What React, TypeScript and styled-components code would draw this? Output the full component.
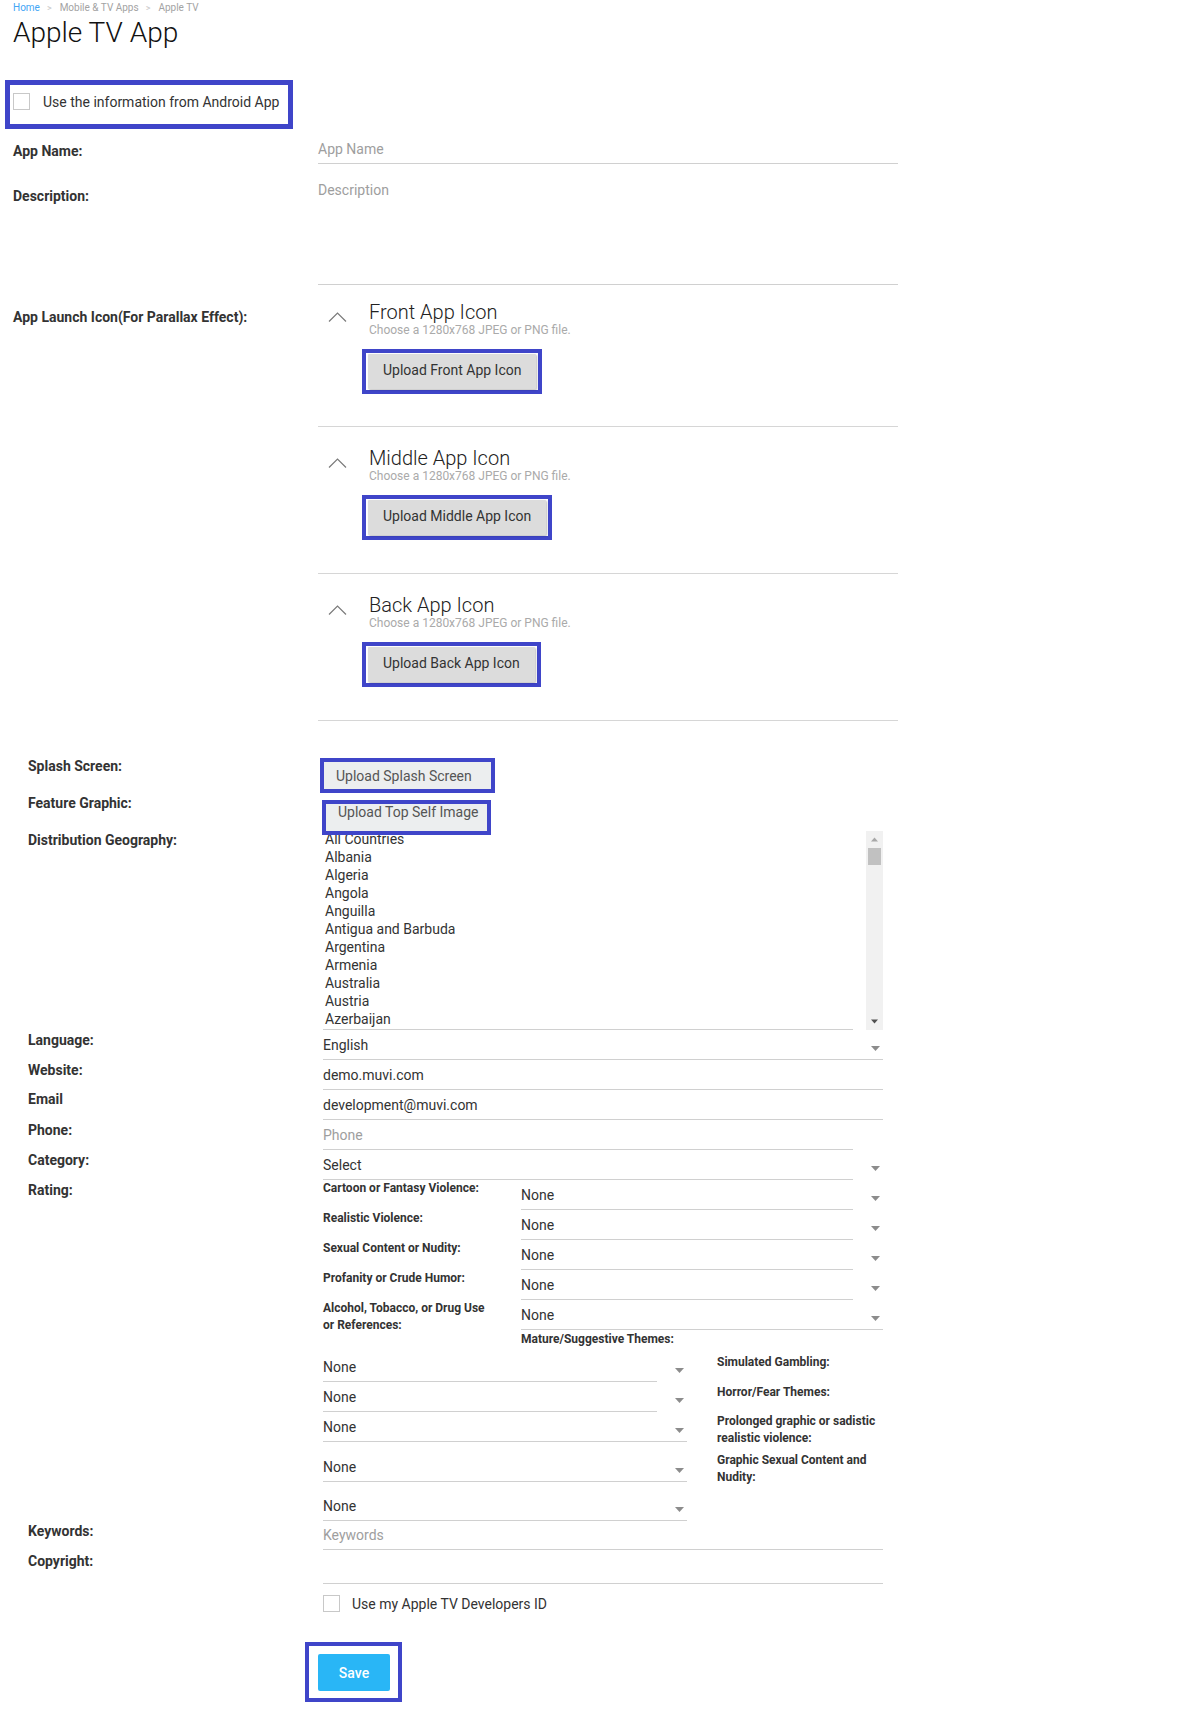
import React from 'react';
import styled, { createGlobalStyle } from 'styled-components';

const GlobalStyle = createGlobalStyle`
  body {
    margin: 0;
    background: #fff;
    font-family: Roboto, 'Liberation Sans', Arial, sans-serif;
    color: #333;
  }
  * { box-sizing: border-box; }
`;

const ANNOT = '#3f45c9';
const RULE = '#d0d0d0';

const Page = styled.div`
  width: 1199px;
  padding: 0 0 13px 13px;
`;

const Breadcrumb = styled.div`
  display: flex;
  align-items: center;
  height: 16px;
  font-size: 10px;
  line-height: 16px;
`;

const Crumb = styled.span<{ $active?: boolean }>`
  color: ${(p) => (p.$active ? '#42a5f5' : '#a3a3a3')};
`;

const Sep = styled.span`
  color: #c8c8c8;
  font-size: 9px;
  margin: 0 8px 0 7px;
`;

const Title = styled.h1`
  margin: 0;
  font-size: 28px;
  line-height: 34px;
  font-weight: 300;
  color: #111;
`;

/* blue annotation frame drawn round some controls */
const Highlight = styled.div`
  display: inline-flex;
  align-items: center;
  position: relative;
  z-index: 1;
  border: 4px solid ${ANNOT};
`;

const AndroidBox = styled(Highlight)`
  border-width: 5px;
  height: 49px;
  margin: 30px 0 0 -8px;
  padding: 0 9px 6px 3px;
  gap: 13px;
  font-size: 14px;
  color: #333;
`;

const Checkbox = styled.span`
  display: inline-block;
  width: 17px;
  height: 17px;
  border: 1px solid #c8c8c8;
  background: #fff;
  flex: none;
`;

const Grid = styled.div<{ $cols: string; $mt?: number }>`
  display: grid;
  grid-template-columns: ${(p) => p.$cols};
  align-items: start;
  margin-top: ${(p) => p.$mt ?? 0}px;
`;

const Label = styled.div<{ $mt?: number }>`
  margin-top: ${(p) => p.$mt ?? 2}px;
  font-size: 14px;
  font-weight: 700;
  line-height: 16px;
  color: #333;
`;

const Line = styled.div<{ $h: number; $short?: boolean; $muted?: boolean; $top?: boolean }>`
  height: ${(p) => p.$h}px;
  margin-right: ${(p) => (p.$short ? 30 : 0)}px;
  border-bottom: 1px solid ${RULE};
  display: flex;
  align-items: ${(p) => (p.$top ? 'flex-start' : 'center')};
  padding-top: ${(p) => (p.$top ? 6 : 0)}px;
  font-size: 14px;
  line-height: 16px;
  color: ${(p) => (p.$muted ? '#9e9e9e' : '#333')};
`;

const SelectWrap = styled.div<{ $mt?: number }>`
  position: relative;
  margin-top: ${(p) => p.$mt ?? 0}px;
`;

const CaretIcon = styled.svg`
  position: absolute;
  right: 3px;
  top: 16px;
`;

const Panel = styled.div<{ $first?: boolean }>`
  display: flex;
  padding: ${(p) => (p.$first ? '15px 0 32px 10px' : '19px 0 33px 10px')};
  border-bottom: 1px solid #d6d6d6;
`;

const ChevCell = styled.div`
  width: 41px;
  flex: none;
  padding-top: 7px;
`;

const PanelBody = styled.div`
  display: flex;
  flex-direction: column;
  align-items: flex-start;
`;

const PanelTitle = styled.div`
  font-size: 20px;
  line-height: 24px;
  font-weight: 300;
  color: #222;
`;

const PanelHint = styled.div`
  margin-top: -1px;
  font-size: 12px;
  line-height: 14px;
  color: #aaa;
`;

const UploadBox = styled(Highlight)`
  margin: 12px 0 0 -7px;
  padding: 1px 2px;
`;

const UploadButton = styled.button`
  height: 35px;
  padding: 0 15px 3px;
  border: 0;
  border-radius: 1px;
  background: #dcdcdc;
  box-shadow: 1px 1px 2px rgba(0, 0, 0, 0.25);
  font-family: inherit;
  font-size: 14px;
  color: #333;
`;

const Section2 = styled.div`
  margin-left: 15px;
`;

const PlainBox = styled(Highlight)<{ $ml: number }>`
  margin-left: ${(p) => p.$ml}px;
`;

const PlainButton = styled.button<{ $w: number; $top?: boolean }>`
  width: ${(p) => p.$w}px;
  height: 27px;
  display: flex;
  align-items: ${(p) => (p.$top ? 'flex-start' : 'center')};
  padding: 0 0 0 12px;
  border: 0;
  background: #eceeef;
  font-family: inherit;
  font-size: 14px;
  line-height: 16px;
  color: #555;
`;

const GeoWrap = styled.div`
  display: flex;
  height: 199px;
`;

const GeoList = styled.div`
  flex: 1;
  margin-right: 13px;
  border-bottom: 1px solid ${RULE};
  overflow: hidden;
`;

const GeoInner = styled.div`
  margin-top: -1px;
  padding-left: 2px;
`;

const GeoItem = styled.div`
  font-size: 14px;
  line-height: 18px;
  color: #333;
`;

const Track = styled.div`
  width: 17px;
  flex: none;
  display: flex;
  flex-direction: column;
  background: #f1f1f1;
`;

const Thumb = styled.div`
  height: 17px;
  margin: 0 2px;
  background: #c1c1c1;
`;

const Spacer = styled.div`
  flex: 1;
`;

const RatingGrid = styled.div`
  display: grid;
  grid-template-columns: 198px 362px;
  grid-auto-rows: 30px;
`;

const SubLabel = styled.div<{ $mt?: number }>`
  margin-top: ${(p) => p.$mt ?? 0}px;
  font-size: 12px;
  font-weight: 700;
  line-height: 17px;
  color: #333;
  white-space: nowrap;
`;

const MatureTitle = styled(SubLabel)`
  margin-left: 198px;
  line-height: 18px;
`;

const MatureGrid = styled.div`
  display: grid;
  grid-template-columns: 364px 166px;
  column-gap: 30px;
`;

const Column = styled.div`
  display: flex;
  flex-direction: column;
`;

const FieldOnly = styled.div`
  margin-left: 295px;
`;

const CheckRow = styled.label`
  display: flex;
  align-items: center;
  gap: 12px;
  margin-top: 11px;
  font-size: 14px;
  color: #333;
`;

const SaveBox = styled(Highlight)`
  margin: 30px 0 0 -18px;
  padding: 8px 8px 7px 9px;
`;

const SaveButton = styled.button`
  width: 72px;
  height: 37px;
  border: 0;
  border-radius: 2px;
  background: #29b6f6;
  font-family: inherit;
  font-size: 14px;
  font-weight: 500;
  color: #fff;
`;

const Caret = () => (
  <CaretIcon width="9" height="5" viewBox="0 0 9 5">
    <path d="M0 0h9L4.5 5z" fill="#8c8c8c" />
  </CaretIcon>
);

const Chevron = () => (
  <svg width="19" height="10" viewBox="0 0 19 10">
    <polyline points="1,9.5 9.5,1 18,9.5" fill="none" stroke="#7a7a7a" strokeWidth="1.2" />
  </svg>
);

const Select = ({ value, short, mt }: { value: string; short?: boolean; mt?: number }) => (
  <SelectWrap $mt={mt}>
    <Line $h={30} $short={short}>
      {value}
    </Line>
    <Caret />
  </SelectWrap>
);

const icons = [
  { title: 'Front App Icon', button: 'Upload Front App Icon' },
  { title: 'Middle App Icon', button: 'Upload Middle App Icon' },
  { title: 'Back App Icon', button: 'Upload Back App Icon' },
];

const countries = [
  'All Countries',
  'Albania',
  'Algeria',
  'Angola',
  'Anguilla',
  'Antigua and Barbuda',
  'Argentina',
  'Armenia',
  'Australia',
  'Austria',
  'Azerbaijan',
  'Bahamas',
];

const ratings: { label: React.ReactNode; short: boolean }[] = [
  { label: 'Cartoon or Fantasy Violence:', short: true },
  { label: 'Realistic Violence:', short: true },
  { label: 'Sexual Content or Nudity:', short: true },
  { label: 'Profanity or Crude Humor:', short: true },
  {
    label: (
      <>
        Alcohol, Tobacco, or Drug Use
        <br />
        or References:
      </>
    ),
    short: false,
  },
];

const matureSelects = [
  { mt: 4, short: true },
  { mt: 0, short: true },
  { mt: 0, short: false },
  { mt: 10, short: false },
  { mt: 9, short: false },
];

const COLS1 = '305px 580px';
const COLS2 = '295px 560px';

export default function App() {
  return (
    <Page>
      <GlobalStyle />
      <Breadcrumb>
        <Crumb $active>Home</Crumb>
        <Sep>&gt;</Sep>
        <Crumb>Mobile &amp; TV Apps</Crumb>
        <Sep>&gt;</Sep>
        <Crumb>Apple TV</Crumb>
      </Breadcrumb>
      <Title>Apple TV App</Title>

      <AndroidBox>
        <Checkbox />
        Use the information from Android App
      </AndroidBox>

      <Grid $cols={COLS1} $mt={5}>
        <Label $mt={9}>App Name:</Label>
        <Line $h={30} $muted>
          App Name
        </Line>
      </Grid>
      <Grid $cols={COLS1} $mt={12}>
        <Label $mt={12}>Description:</Label>
        <Line $h={109} $muted $top>
          Description
        </Line>
      </Grid>
      <Grid $cols={COLS1}>
        <Label $mt={24}>App Launch Icon(For Parallax Effect):</Label>
        <div>
          {icons.map((icon, i) => (
            <Panel key={icon.title} $first={i === 0}>
              <ChevCell>
                <Chevron />
              </ChevCell>
              <PanelBody>
                <PanelTitle>{icon.title}</PanelTitle>
                <PanelHint>Choose a 1280x768 JPEG or PNG file.</PanelHint>
                <UploadBox>
                  <UploadButton>{icon.button}</UploadButton>
                </UploadBox>
              </PanelBody>
            </Panel>
          ))}
        </div>
      </Grid>

      <Section2>
        <Grid $cols={COLS2} $mt={37}>
          <Label $mt={0}>Splash Screen:</Label>
          <div>
            <PlainBox $ml={-3}>
              <PlainButton $w={167}>Upload Splash Screen</PlainButton>
            </PlainBox>
          </div>
        </Grid>
        <Grid $cols={COLS2} $mt={7}>
          <Label $mt={-5}>Feature Graphic:</Label>
          <div>
            <PlainBox $ml={-1}>
              <PlainButton $w={161} $top>
                Upload Top Self Image
              </PlainButton>
            </PlainBox>
          </div>
        </Grid>
        <Grid $cols={COLS2} $mt={-4}>
          <Label $mt={1}>Distribution Geography:</Label>
          <GeoWrap>
            <GeoList>
              <GeoInner>
                {countries.map((c) => (
                  <GeoItem key={c}>{c}</GeoItem>
                ))}
              </GeoInner>
            </GeoList>
            <Track>
              <svg width="17" height="17" viewBox="0 0 17 17">
                <path d="M5 10.5h7L8.5 6.5z" fill="#a8a8a8" />
              </svg>
              <Thumb />
              <Spacer />
              <svg width="17" height="17" viewBox="0 0 17 17">
                <path d="M5 6.5h7L8.5 10.5z" fill="#505050" />
              </svg>
            </Track>
          </GeoWrap>
        </Grid>

        <Grid $cols={COLS2}>
          <Label>Language:</Label>
          <Select value="English" />
        </Grid>
        <Grid $cols={COLS2}>
          <Label>Website:</Label>
          <Line $h={30}>demo.muvi.com</Line>
        </Grid>
        <Grid $cols={COLS2}>
          <Label $mt={1}>Email</Label>
          <Line $h={30}>development@muvi.com</Line>
        </Grid>
        <Grid $cols={COLS2}>
          <Label>Phone:</Label>
          <Line $h={30} $short $muted>
            Phone
          </Line>
        </Grid>
        <Grid $cols={COLS2}>
          <Label>Category:</Label>
          <Select value="Select" short />
        </Grid>

        <Grid $cols={COLS2}>
          <Label>Rating:</Label>
          <div>
            <RatingGrid>
              {ratings.map((r, i) => (
                <React.Fragment key={i}>
                  <SubLabel>{r.label}</SubLabel>
                  <Select value="None" short={r.short} />
                </React.Fragment>
              ))}
            </RatingGrid>
            <MatureTitle>Mature/Suggestive Themes:</MatureTitle>
            <MatureGrid>
              <Column>
                {matureSelects.map((m, i) => (
                  <Select key={i} value="None" short={m.short} mt={m.mt} />
                ))}
              </Column>
              <Column>
                <SubLabel $mt={6}>Simulated Gambling:</SubLabel>
                <SubLabel $mt={13}>Horror/Fear Themes:</SubLabel>
                <SubLabel $mt={12}>
                  Prolonged graphic or sadistic
                  <br />
                  realistic violence:
                </SubLabel>
                <SubLabel $mt={5}>
                  Graphic Sexual Content and
                  <br />
                  Nudity:
                </SubLabel>
              </Column>
            </MatureGrid>
          </div>
        </Grid>

        <Grid $cols={COLS2}>
          <Label>Keywords:</Label>
          <Line $h={29} $muted>
            Keywords
          </Line>
        </Grid>
        <Grid $cols={COLS2}>
          <Label $mt={3}>Copyright:</Label>
          <Line $h={34} />
        </Grid>

        <FieldOnly>
          <CheckRow>
            <Checkbox />
            Use my Apple TV Developers ID
          </CheckRow>
          <SaveBox>
            <SaveButton>Save</SaveButton>
          </SaveBox>
        </FieldOnly>
      </Section2>
    </Page>
  );
}
